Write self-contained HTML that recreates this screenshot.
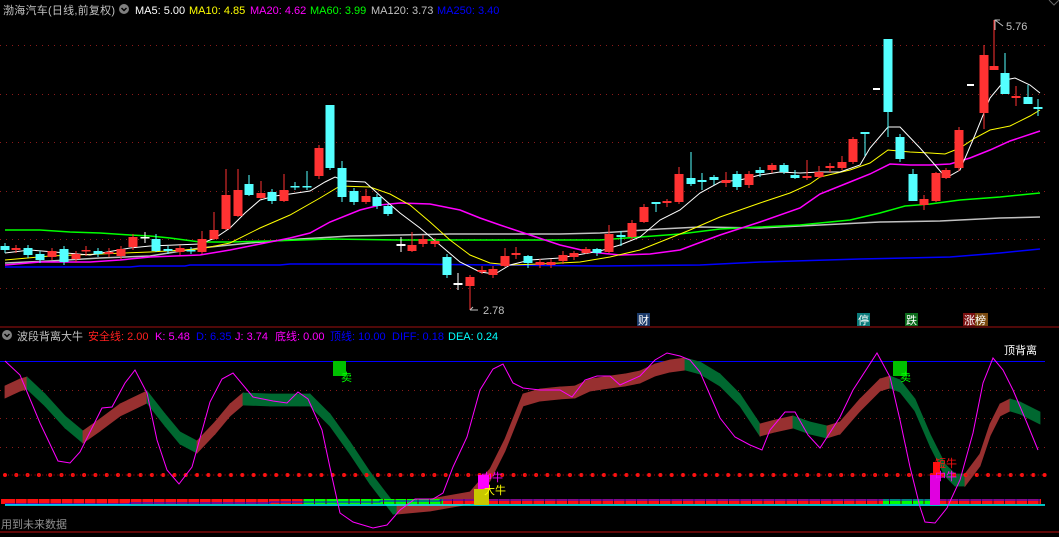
<!DOCTYPE html>
<html><head><meta charset="utf-8"><style>
html,body{margin:0;padding:0;background:#000;width:1059px;height:537px;overflow:hidden}
svg{display:block}
text{font-family:"Liberation Sans","Noto Sans CJK SC",sans-serif;font-size:11px}
</style></head><body>
<svg id="s" width="1059" height="537" xmlns="http://www.w3.org/2000/svg">
<rect width="1059" height="537" fill="#000"/>
<g stroke="#8b1a1a" stroke-dasharray="1,5" stroke-width="1">
<line x1="0" y1="45.5" x2="1045" y2="45.5"/><line x1="0" y1="94.5" x2="1045" y2="94.5"/>
<line x1="0" y1="142.5" x2="1045" y2="142.5"/><line x1="0" y1="191.5" x2="1045" y2="191.5"/>
<line x1="0" y1="239.5" x2="1045" y2="239.5"/><line x1="0" y1="288.5" x2="1045" y2="288.5"/>
<line x1="0" y1="390.5" x2="1045" y2="390.5"/><line x1="0" y1="418.5" x2="1045" y2="418.5"/>
<line x1="0" y1="447.5" x2="1045" y2="447.5"/>
</g>
<line x1="0" y1="327" x2="1059" y2="327" stroke="#a01010"/>
<line x1="0" y1="532" x2="1059" y2="532" stroke="#c01010"/>
<line x1="0" y1="361.5" x2="1045" y2="361.5" stroke="#0000ff"/>
<g id="ma"></g>
<g id="cd"></g>
<g id="ind"></g>
<text x="3" y="14" fill="#c0c0c0" textLength="112">渤海汽车(日线,前复权)</text>
<circle cx="124" cy="9" r="5" fill="#808080"/><path d="M121.5 8 L124 10.5 L126.5 8" stroke="#000" stroke-width="1.5" fill="none"/>
<text x="135" y="14" fill="#fff">MA5: 5.00</text>
<text x="189" y="14" fill="#ffff00">MA10: 4.85</text>
<text x="250" y="14" fill="#ff00ff">MA20: 4.62</text>
<text x="310" y="14" fill="#00ff00">MA60: 3.99</text>
<text x="371" y="14" fill="#c0c0c0">MA120: 3.73</text>
<text x="437" y="14" fill="#0000ff">MA250: 3.40</text>
<path d="M1049 0 L1054 5 L1059 0" stroke="#666" fill="none"/>
<path d="M995 30 L995 20 L1000 20 M995 20 L1003 26" stroke="#c0c0c0" fill="none"/>
<text x="1006" y="30" fill="#c0c0c0">5.76</text>
<path d="M470 310 L478 310 M470 310 L473 307" stroke="#c0c0c0" fill="none"/>
<text x="483" y="314" fill="#c0c0c0">2.78</text>
<rect x="873" y="88" width="7" height="2" fill="#fff"/><rect x="967" y="84" width="7" height="2" fill="#fff"/>
<rect x="637" y="313" width="13" height="13" fill="#1a3a6a"/><text x="638" y="324" fill="#fff">财</text>
<rect x="857" y="313" width="13" height="13" fill="#0a7a7a"/><text x="858" y="324" fill="#fff">停</text>
<rect x="905" y="313" width="13" height="13" fill="#0a6a1a"/><text x="906" y="324" fill="#fff">跌</text>
<rect x="963" y="313" width="12" height="13" fill="#7a1010"/><rect x="975" y="313" width="13" height="13" fill="#7a4a10"/><text x="964" y="324" fill="#fff">涨榜</text>
<circle cx="7" cy="335" r="5" fill="#808080"/><path d="M4.5 334 L7 336.5 L9.5 334" stroke="#000" stroke-width="1.5" fill="none"/>
<text x="17" y="340" fill="#c0c0c0">波段背离大牛</text>
<text x="88" y="340" fill="#ff2020">安全线: 2.00</text>
<text x="155" y="340" fill="#ff00ff">K: 5.48</text>
<text x="196" y="340" fill="#0000ff">D: 6.35</text>
<text x="235" y="340" fill="#ff00ff">J: 3.74</text>
<text x="275" y="340" fill="#ff00ff">底线: 0.00</text>
<text x="330" y="340" fill="#0000ff">顶线: 10.00</text>
<text x="392" y="340" fill="#0000ff">DIFF: 0.18</text>
<text x="448" y="340" fill="#00ffff">DEA: 0.24</text>
<text x="1004" y="354" fill="#fff">顶背离</text>
<text x="1" y="528" fill="#909090">用到未来数据</text>
</svg>
<script>
var NS="http://www.w3.org/2000/svg";
function el(p,t,a){var e=document.createElementNS(NS,t);for(var k in a)e.setAttribute(k,a[k]);p.appendChild(e);return e;}
function pl(p,pts,c,w){el(p,"polyline",{points:pts.map(function(q){return q.join(",")}).join(" "),stroke:c,"stroke-width":w||1,fill:"none"});}
var ma=document.getElementById("ma");
pl(ma,[[5,267],[130,267],[140,266],[185,266],[190,265],[280,265],[290,264],[400,264],[600,266],[700,265],[760,262],[860,259],[950,257],[1000,253],[1040,249]],"#0000ff",1.5);
pl(ma,[[5,263],[50,261],[100,258],[150,256],[200,248],[250,243],[300,239],[350,236],[400,235],[450,234],[560,234],[600,233],[660,229],[700,227],[760,228],[820,225],[880,222],[940,221],[1000,218],[1040,217]],"#c0c0c0",1.5);
pl(ma,[[5,230],[40,230],[70,232],[100,233],[130,235],[150,236],[170,238],[200,242],[230,242],[270,241],[330,239],[400,240],[600,240],[640,237],[680,234],[720,229],[760,227],[800,225],[850,220],[880,213],[905,206],[930,204],[960,200],[1000,197],[1040,193]],"#00ff00",1.5);
pl(ma,[[5,265],[40,262],[90,262],[120,260],[150,257],[200,255],[230,250],[260,244],[290,238],[310,233],[330,222],[360,210],[380,205],[400,203],[430,204],[460,210],[480,218],[500,225],[530,235],[560,245],[590,252],[620,255],[650,254],[680,250],[720,235],[760,222],[800,208],[820,194],[850,182],[870,174],[890,164],[910,165],[930,165],[950,164],[970,158],[990,150],[1010,141],[1040,131]],"#ff00ff",1.5);
pl(ma,[[5,260],[50,256],[100,254],[150,252],[200,249],[230,243],[260,228],[290,215],[320,198],[340,186],[370,187],[390,194],[410,205],[430,222],[450,240],[470,255],[490,263],[510,265],[540,264],[580,262],[610,257],[640,250],[660,242],[690,230],[720,217],[740,210],[760,203],[790,193],[810,184],[820,177],[850,170],[870,163],[888,150],[910,152],[930,153],[945,154],[960,148],[975,138],[990,130],[1010,126],[1030,116],[1040,110]],"#ffff00",1);
pl(ma,[[5,253],[30,250],[90,255],[130,248],[150,246],[200,244],[215,238],[230,228],[245,213],[260,200],[275,196],[290,194],[310,191],[325,182],[335,177],[345,181],[365,182],[385,200],[400,213],[420,228],[440,245],[460,262],[480,272],[495,274],[510,265],[530,260],[560,258],[600,251],[620,245],[640,237],[660,220],[680,210],[700,193],[720,182],[740,180],[760,175],[780,172],[800,173],[820,172],[840,172],[860,165],[870,148],[888,127],[900,127],[920,148],[935,165],[946,178],[960,170],[975,135],[990,98],[1005,80],[1015,78],[1030,85],[1040,93]],"#fff",1);
var R="#ff3232",C="#54ffff",W="#fff";
var cd=[[5,246,250,C],[16,248,250,R],[28,248,255,C],[40,254,260,C],[52,251,257,R],[64,249,262,C],[76,254,259,R],[86,250,251,R,246,256],[98,251,254,C],[109,252,254,R,248,257],[121,249,256,R],[133,237,247,R],[145,237,238,W,232,243],[156,239,251,C,234,252],[168,249,251,C],[180,248,252,R],[191,250,251,C],[202,239,252,R,231,254],[214,230,239,R,212,240],[226,195,229,R,169,230],[238,190,216,R,169,217],[249,184,195,C,175,196],[261,193,198,R,181,199],[272,192,201,C],[284,190,201,R,174,202],[295,186,187,C,182,190],[307,186,187,C,171,190],[319,148,176,R],[330,105,168,C,105,170],[342,168,197,C,161,202],[354,191,202,C],[366,196,202,R,189,204],[377,197,206,C],[388,206,214,C,204,216],
[401,244,246,W,237,252],[412,245,251,R,232,252],[423,239,244,R,235,247],[435,241,244,R],[447,257,275,C],[458,283,285,W,273,290],[470,277,286,R,275,310],[482,270,272,R,266,274],[493,269,275,R],[505,256,266,R,248,267],[516,253,255,R,247,259],[528,256,263,C,255,268],[540,262,265,R],[551,262,265,R],[563,255,261,R,251,264],[574,253,257,R,251,260],[586,249,253,R,247,254],[597,249,253,C,248,256],[609,234,252,R,225,253],[621,235,237,C,231,246],[632,223,237,R],[644,207,222,R,204,223],[656,202,204,C,202,212],[667,201,203,R,199,207],[679,174,202,R,167,204],[691,178,184,C,152,186],[702,180,182,C,173,190],[714,177,180,C,175,185],[726,180,183,R,172,187],[737,174,187,C],[749,174,185,R],[760,170,173,C,167,177],[772,165,170,R,163,173],[784,165,172,C,163,174],[795,175,178,C,170,179],[807,176,178,R,160,180],[819,172,177,R,166,178],
[830,166,168,R,163,172],[842,162,168,R,156,170],[853,139,162,R,137,164],[865,132,134,C,132,156],[888,39,112,C,112,137],[900,137,159,C],[913,174,201,C,169,201],[924,199,205,R,195,210],[936,173,201,R,172,202],[946,170,178,R,168,179],[959,130,168,R],[984,55,113,R,45,129],[994,66,70,R,20,70],[1005,73,94,C,53,94],[1016,96,98,R,86,106],[1028,97,104,C,85,104],[1038,107,109,C,99,116]];
var g=document.getElementById("cd");
cd.forEach(function(c){var x=c[0],t=c[1],b=c[2],col=c[3],h=c[4]!==undefined?c[4]:t-3,l=c[5]!==undefined?c[5]:b+3;
el(g,"line",{x1:x,y1:h,x2:x,y2:l,stroke:col,"stroke-width":1});
el(g,"rect",{x:x-4.5,y:t,width:9,height:Math.max(b-t,1.5),fill:col});});
var ig=document.getElementById("ind");
var rib=[[5,392],[20,385],[27,383],[45,400],[65,422],[83,437],[100,425],[120,410],[147,397],[165,420],[180,438],[197,447],[215,428],[230,410],[243,399],[270,400],[300,400],[310,400],[330,420],[350,448],[370,478],[393,508],[397,508],[430,505],[470,498],[490,475],[505,445],[523,400],[540,395],[560,393],[575,392],[590,385],[610,382],[625,380],[640,377],[655,370],[670,366],[685,364],[700,368],[720,380],[740,400],[760,430],[775,426],[793,422],[810,428],[827,432],[840,428],[860,405],[880,385],[890,382],[900,386],[915,405],[930,440],[945,470],[955,480],[965,480],[980,460],[990,430],[1000,410],[1010,405],[1020,408],[1040,418]];
for(var i=0;i<rib.length-1;i++){var a=rib[i],b=rib[i+1];var up=b[1]<a[1]-0.5||(Math.abs(b[1]-a[1])<=0.5&&i>0&&rib[i-1][1]>a[1]);
var c=up?"#983030":"#006830";
el(ig,"polygon",{points:a[0]+","+(a[1]-6)+" "+b[0]+","+(b[1]-6)+" "+b[0]+","+(b[1]+6)+" "+a[0]+","+(a[1]+6),fill:c,stroke:c,"stroke-width":0.8});}
for(var x=5;x<1045;x+=11.3)el(ig,"circle",{cx:x,cy:475,r:2,fill:"#ff1010"});
for(var x=8;x<1045;x+=3.8)el(ig,"rect",{x:x,y:474.5,width:1,height:1,fill:"#a01010"});
el(ig,"rect",{x:1,y:499,width:1040,height:5,fill:"#ff1010"});
el(ig,"rect",{x:303,y:499,width:140,height:5,fill:"#00ff00"});
el(ig,"rect",{x:883,y:499,width:47,height:5,fill:"#00ff00"});
for(var x=15;x<1040;x+=11.5)el(ig,"rect",{x:x,y:499,width:1,height:5,fill:"#600"});
pl(ig,[[5,504],[130,504],[130,503],[270,503],[270,502],[380,502],[380,501],[440,501],[440,500],[1040,500]],"#0000ff",1);
el(ig,"line",{x1:5,y1:505,x2:1045,y2:505,stroke:"#00ffff","stroke-width":1.5});
el(ig,"rect",{x:474,y:489,width:15,height:16,fill:"#c8c800"});
el(ig,"rect",{x:478,y:475,width:11,height:14,fill:"#ff00ff"});
el(ig,"rect",{x:930,y:475,width:10,height:30,fill:"#e000e0"});
el(ig,"rect",{x:933,y:462,width:7,height:13,fill:"#ff1010"});
var t1=el(ig,"text",{x:481,y:481,fill:"#ff00ff"});t1.textContent="中牛";
var t2=el(ig,"text",{x:484,y:494,fill:"#ffff00"});t2.textContent="大牛";
var t3=el(ig,"text",{x:935,y:467,fill:"#ff1010"});t3.textContent="短牛";
var t4=el(ig,"text",{x:935,y:480,fill:"#ff00ff"});t4.textContent="中牛";
el(ig,"rect",{x:333,y:361,width:13,height:15,fill:"#00c000"});
el(ig,"rect",{x:893,y:361,width:14,height:15,fill:"#00c000"});
var s1=el(ig,"text",{x:341,y:381,fill:"#00ff00"});s1.textContent="卖";
var s2=el(ig,"text",{x:900,y:381,fill:"#00ff00"});s2.textContent="卖";
pl(ig,[[5,361],[20,375],[40,423],[58,461],[70,463],[80,452],[102,408],[112,407],[125,383],[135,370],[147,393],[157,440],[167,470],[179,484],[192,467],[210,402],[222,379],[233,373],[253,397],[273,401],[287,403],[298,392],[308,399],[322,430],[332,477],[340,513],[353,522],[373,528],[387,525],[400,510],[415,499],[433,499],[443,493],[453,467],[467,437],[480,390],[493,369],[503,364],[513,383],[523,388],[540,390],[560,390],[572,397],[585,380],[597,376],[610,376],[620,385],[640,376],[655,360],[667,353],[680,356],[690,360],[700,372],[710,395],[720,418],[735,437],[750,445],[762,450],[770,430],[785,412],[795,412],[808,435],[820,448],[840,417],[853,390],[877,353],[890,377],[900,420],[910,467],[920,507],[925,522],[935,523],[947,508],[960,480],[973,433],[983,383],[993,358],[1003,370],[1013,390],[1027,423],[1038,450]],"#ff00ff",1);
</script>
</body></html>
